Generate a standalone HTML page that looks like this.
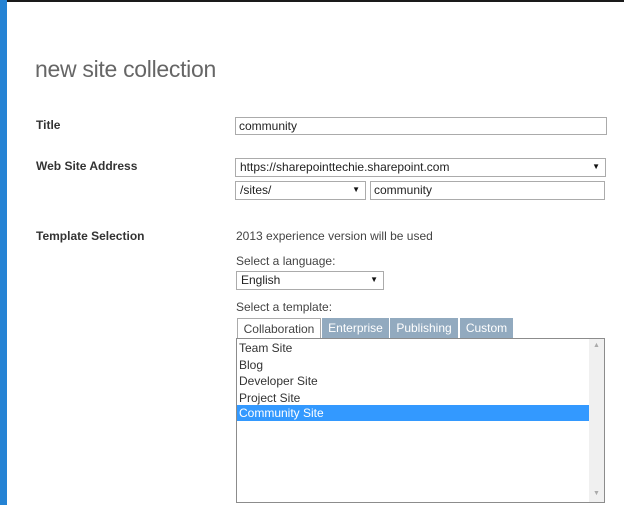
<!DOCTYPE html>
<html><head><style>
*{margin:0;padding:0;box-sizing:border-box}
body{width:624px;height:505px;background:#fff;position:relative;overflow:hidden;font-family:"Segoe UI","Liberation Sans",sans-serif;font-size:12px;color:#333}
.a{position:absolute}
.lbl{font-weight:bold;font-size:12px;color:#333;left:36px}
.box{position:absolute;border:1px solid #ababab;background:#fff;padding-left:3px;line-height:16px;font-size:12px;color:#222;white-space:nowrap}
.arr{position:absolute;right:5px;top:0;font-size:8px;color:#111}
.tab{position:absolute;top:318px;height:20px;background:#92aabf;color:#fff;font-size:12px;line-height:20px;text-align:center}
.item{position:absolute;left:237px;width:352px;height:16.5px;line-height:16px;padding-left:2px;font-size:12px;color:#333}
</style></head><body>
<div class="a" style="left:0;top:0;width:624px;height:2px;background:#1a1a1a"></div>
<div class="a" style="left:0;top:0;width:7px;height:505px;background:#2583d4"></div>
<div class="a" style="left:35px;top:56px;font-size:23px;color:#666;font-weight:300;letter-spacing:-0.3px">new site collection</div>
<div class="a lbl" style="top:118px">Title</div>
<div class="a lbl" style="top:159px">Web Site Address</div>
<div class="a lbl" style="top:229px">Template Selection</div>
<div class="box" style="left:235px;top:117px;width:372px;height:18px">community</div>
<div class="box" style="left:235px;top:158px;width:371px;height:19px;padding-left:4px">https://sharepointtechie.sharepoint.com<span class="arr">▼</span></div>
<div class="box" style="left:235px;top:181px;width:131px;height:19px;padding-left:4px">/sites/<span class="arr">▼</span></div>
<div class="box" style="left:370px;top:181px;width:235px;height:19px">community</div>
<div class="a" style="left:236px;top:229px;color:#444">2013 experience version will be used</div>
<div class="a" style="left:236px;top:254px;color:#444">Select a language:</div>
<div class="box" style="left:236px;top:271px;width:148px;height:19px;padding-left:4px">English<span class="arr">▼</span></div>
<div class="a" style="left:236px;top:300px;color:#444">Select a template:</div>
<div class="tab" style="left:237px;width:84px;background:#fff;color:#444;border:1px solid #ababab;border-bottom:none;height:21px">Collaboration</div>
<div class="tab" style="left:322px;width:67px">Enterprise</div>
<div class="tab" style="left:390px;width:68px">Publishing</div>
<div class="tab" style="left:460px;width:53px">Custom</div>
<div class="a" style="left:236px;top:338px;width:369px;height:165px;border:1px solid #8c8c8c;background:#fff"></div>
<div class="a" style="left:589px;top:339px;width:15px;height:163px;background:#f0f0f0"></div>
<div class="a" style="left:593px;top:342px;font-size:7px;color:#aaa">▲</div>
<div class="a" style="left:593px;top:490px;font-size:7px;color:#aaa">▼</div>
<div class="item" style="top:340px">Team Site</div>
<div class="item" style="top:356.5px">Blog</div>
<div class="item" style="top:373px">Developer Site</div>
<div class="item" style="top:389.5px">Project Site</div>
<div class="item" style="top:405px;background:#3399ff;color:#fff;height:16px">Community Site</div>
</body></html>
